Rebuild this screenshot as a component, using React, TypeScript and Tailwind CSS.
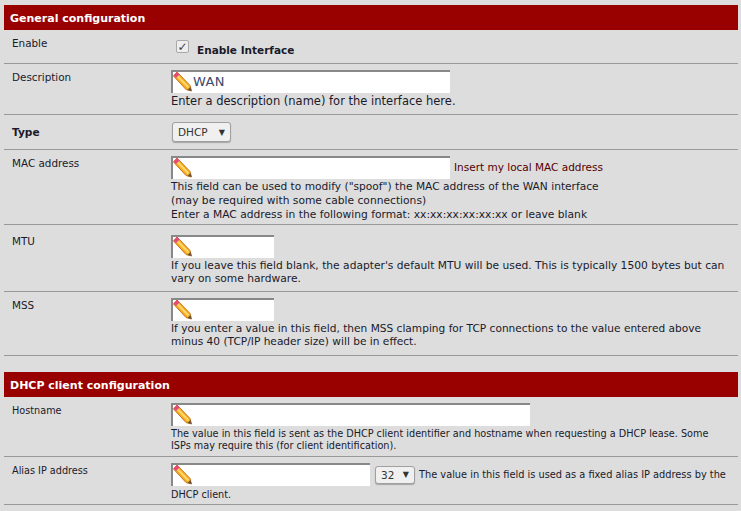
import React from 'react';

const Pencil: React.FC = () => (
  <svg className="absolute left-0 top-[-2px]" width="20" height="23" viewBox="0 0 20 23">
    <path d="M4 2 L17 15.5 L18.5 21 L13 19.5 L0.5 6 Z" fill="#f5ad24" stroke="#c9761a" strokeWidth="1" />
    <path d="M3.5 5 L15.5 17.5" stroke="#ffd868" strokeWidth="2" />
    <path d="M0.5 5.5 L4 2 L6.5 4.5 L3 8 Z" fill="#e8487a" />
    <path d="M14.5 20 L18.5 21 L17.5 17 Z" fill="#6a5238" />
  </svg>
);

const Field: React.FC<{ width: string; value?: string }> = ({ width, value }) => (
  <div className={`relative h-[23px] shrink-0 bg-white border-t-[2px] border-l-[2px] border-[#888888] ${width}`}>
    <Pencil />
    {value && <span className="absolute left-[20px] top-0 text-[13px] leading-[20px] tracking-[0.4px] text-[#3a4a6a]">{value}</span>}
  </div>
);

const Select: React.FC<{ label: string; width: string; height: string }> = ({ label, width, height }) => (
  <div className={`flex items-center justify-between rounded-[3px] border border-[#a0a0a0] bg-[#f0f0f0] pl-[5px] pr-[5px] shadow-[0_1px_1px_rgba(0,0,0,0.25)] text-[10.5px] text-[#333] ${width} ${height}`}>
    <span>{label}</span>
    <span className="text-[8px] text-[#333]">▼</span>
  </div>
);

const Header: React.FC<{ title: string }> = ({ title }) => (
  <div className="h-[25px] bg-[#990000] pl-[6px] text-[11px] font-bold leading-[27px] text-white">{title}</div>
);

const Row: React.FC<{ label: React.ReactNode; className: string; children: React.ReactNode }> = ({ label, className, children }) => (
  <div className={`flex border-b border-[#999999] ${className}`}>
    <div className="w-[167px] shrink-0 pl-[8px]">{label}</div>
    <div className="min-w-0 flex-1 whitespace-nowrap">{children}</div>
  </div>
);

export default function App() {
  return (
    <div className="h-[511px] w-[741px] overflow-hidden bg-[#dddddd] pl-[4px] pr-[3px] pt-[5px] font-['DejaVu_Sans',sans-serif] text-[10.7px] leading-[13px] text-[#1a1a2a]">
      <Header title="General configuration" />
      <Row label={<div className="pt-[7px] text-[10.4px]">Enable</div>} className="h-[34px]">
        <div className="flex pl-[5px] pt-[10px]">
          <div className="flex h-[13px] w-[13px] items-center justify-center rounded-[2px] border border-[#a8a8a8] bg-[#eeeeee] text-[12px] font-bold leading-none text-[#444]">✓</div>
          <span className="pl-[8px] pt-[4px] text-[10.5px] font-bold">Enable Interface</span>
        </div>
      </Row>
      <Row label={<div className="pt-[7px] text-[10.4px]">Description</div>} className="h-[51px]">
        <div className="pt-[6px]">
          <Field width="w-[279px]" value="WAN" />
          <div className="pt-[2px] text-[11.5px]">Enter a description (name) for the interface here.</div>
        </div>
      </Row>
      <Row label={<div className="pt-[11px] text-[10.6px] font-bold">Type</div>} className="h-[35px]">
        <div className="pl-[1px] pt-[7px]">
          <Select label="DHCP" width="w-[59px]" height="h-[20px]" />
        </div>
      </Row>
      <Row label={<div className="pt-[7px] text-[10.4px]">MAC address</div>} className="h-[75px]">
        <div className="pt-[6px]">
          <div className="flex items-center">
            <Field width="w-[279px]" />
            <span className="pl-[4px] text-[10.5px] text-[#550000]">Insert my local MAC address</span>
          </div>
          <div className="pt-[1px] leading-[14px]">
            <div className="text-[10.65px]">This field can be used to modify ("spoof") the MAC address of the WAN interface</div>
            <div>(may be required with some cable connections)</div>
            <div>Enter a MAC address in the following format: xx:xx:xx:xx:xx:xx or leave blank</div>
          </div>
        </div>
      </Row>
      <Row label={<div className="pt-[10px] text-[10.4px]">MTU</div>} className="h-[67px]">
        <div className="pt-[10px]">
          <Field width="w-[103px]" />
          <div className="pt-[1px]">If you leave this field blank, the adapter's default MTU will be used. This is typically 1500 bytes but can</div>
          <div>vary on some hardware.</div>
        </div>
      </Row>
      <Row label={<div className="pt-[7px] text-[10.4px]">MSS</div>} className="h-[64px]">
        <div className="pt-[6px] text-[10.6px]">
          <Field width="w-[103px]" />
          <div className="pt-[1px]">If you enter a value in this field, then MSS clamping for TCP connections to the value entered above</div>
          <div>minus 40 (TCP/IP header size) will be in effect.</div>
        </div>
      </Row>
      <div className="h-[16px]" />
      <Header title="DHCP client configuration" />
      <Row label={<div className="pt-[7px] text-[9.7px]">Hostname</div>} className="h-[60px]">
        <div className="pt-[6px] text-[9.7px] leading-[12px]">
          <Field width="w-[359px]" />
          <div className="pt-[2px]">The value in this field is sent as the DHCP client identifier and hostname when requesting a DHCP lease. Some</div>
          <div>ISPs may require this (for client identification).</div>
        </div>
      </Row>
      <Row label={<div className="pt-[7px] text-[9.7px]">Alias IP address</div>} className="h-[48px]">
        <div className="pt-[6px] text-[9.7px] leading-[12px]">
          <div className="flex items-center">
            <Field width="w-[199px]" />
            <div className="pl-[5px]">
              <Select label="32" width="w-[40px]" height="h-[18px]" />
            </div>
            <span className="pl-[4px] text-[9.8px]">The value in this field is used as a fixed alias IP address by the</span>
          </div>
          <div className="pt-[3px]">DHCP client.</div>
        </div>
      </Row>
    </div>
  );
}
